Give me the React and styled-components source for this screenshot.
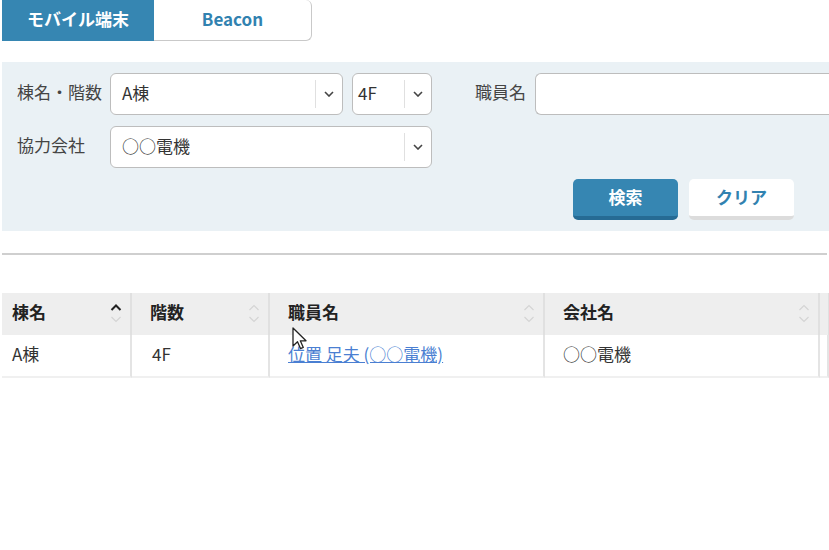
import React from 'react';
import styled, { createGlobalStyle } from 'styled-components';

const Global = createGlobalStyle`
  html, body {
    margin: 0;
    padding: 0;
    background: #fff;
  }
  body {
    font-family: "Noto Sans CJK JP", "Noto Sans", sans-serif;
    color: #333;
    line-height: 1.2;
  }
`;

const Page = styled.div`
  width: 829px;
  height: 550px;
  padding-left: 2px;
  box-sizing: border-box;
  overflow: hidden;
  position: relative;
`;

const Tabs = styled.div`
  display: flex;
  height: 41px;
`;

const Tab = styled.div`
  width: ${(p) => (p.active ? '152px' : '158px')};
  box-sizing: border-box;
  display: flex;
  align-items: center;
  justify-content: center;
  padding-bottom: 2px;
  font-size: 17px;
  font-weight: 700;
  background: ${(p) => (p.active ? '#3686b2' : '#fff')};
  color: ${(p) => (p.active ? '#fff' : '#3182b0')};
  border: ${(p) => (p.active ? 'none' : '1px solid #c9c9c9')};
  border-left: none;
  border-top: none;
  border-radius: ${(p) => (p.active ? '0' : '0 6px 6px 0')};
`;

const Panel = styled.div`
  margin-top: 21px;
  width: 827px;
  height: 169px;
  box-sizing: border-box;
  background: #eaf1f5;
  padding: 11px 0 0 15px;
  display: flex;
  flex-direction: column;
  gap: 11px;
`;

const Row = styled.div`
  display: flex;
  align-items: center;
  height: 42px;
`;

const Label = styled.div`
  width: ${(p) => (p.auto ? 'auto' : '93px')};
  font-size: 17px;
  color: #444;
  white-space: nowrap;
  padding-bottom: 4px;
  margin-left: ${(p) => p.offset || 0}px;
`;

const Select = styled.div`
  width: ${(p) => p.width}px;
  height: 42px;
  box-sizing: border-box;
  background: #fff;
  border: 1px solid #bdbdbd;
  border-radius: 6px;
  display: flex;
  align-items: center;
  margin-right: ${(p) => p.gap || 0}px;
  flex-shrink: 0;
`;

const SelectValue = styled.div`
  flex: 1;
  padding-left: ${(p) => p.pad || 11}px;
  padding-bottom: 2px;
  font-size: 17px;
  color: #333;
`;

const SelectArrow = styled.div`
  width: 26px;
  height: 28px;
  border-left: 1px solid #e0e0e0;
  display: flex;
  align-items: center;
  justify-content: center;
  color: #555;
`;

const TextInput = styled.div`
  flex: 1;
  height: 42px;
  box-sizing: border-box;
  background: #fff;
  border: 1px solid #bdbdbd;
  border-right: none;
  border-radius: 6px 0 0 6px;
  margin-left: 9px;
`;

const Buttons = styled.div`
  display: flex;
  gap: 11px;
  padding-left: 556px;
`;

const Button = styled.div`
  width: 105px;
  height: 41px;
  box-sizing: border-box;
  border-radius: 5px;
  display: flex;
  align-items: center;
  justify-content: center;
  font-size: 17px;
  font-weight: 700;
  background: ${(p) => (p.primary ? '#3686b2' : '#fff')};
  color: ${(p) => (p.primary ? '#fff' : '#3182b0')};
  border-bottom: 4px solid ${(p) => (p.primary ? '#266b94' : '#dcdcdc')};
`;

const Divider = styled.div`
  margin-top: 22px;
  width: 825px;
  height: 2px;
  background: #cfcfcf;
`;

const TableWrap = styled.div`
  margin-top: 38px;
  position: relative;
`;

const Table = styled.div`
  display: grid;
  grid-template-columns: 130px 138px 275px 275px 9px;
`;

const HeadCell = styled.div`
  height: 42px;
  box-sizing: border-box;
  background: #eeeeee;
  border-right: 2px solid #e0e0e0;
  display: flex;
  align-items: center;
  padding-left: ${(p) => p.pad}px;
  padding-right: 8px;
  font-size: 17px;
  font-weight: 700;
  color: #222;
`;

const HeadText = styled.span`
  flex: 1;
  padding-bottom: 4px;
`;

const Cell = styled.div`
  height: 43px;
  box-sizing: border-box;
  border-right: 2px solid #e4e4e4;
  border-bottom: 2px solid #f0f0f0;
  display: flex;
  align-items: center;
  padding-left: ${(p) => p.pad}px;
  padding-bottom: 3px;
  font-size: 17px;
  color: #333;
`;

const Link = styled.a`
  color: #4a7fd2;
  text-decoration: underline;
`;

const Cursor = styled.svg`
  position: absolute;
  left: 290px;
  top: 34px;
`;

const Chevron = () => (
  <svg width="10" height="6" viewBox="0 0 10 6">
    <path d="M1 1l4 4 4-4" fill="none" stroke="#444" strokeWidth="1.6" />
  </svg>
);

const Sort = ({ active }) => (
  <svg width="12" height="22" viewBox="0 0 12 22">
    <path d="M1.5 7l4.5-4.5L10.5 7" fill="none" stroke={active ? '#222' : '#d4d4d4'} strokeWidth={active ? 2 : 1.2} />
    <path d="M1.5 14l4.5 4.5 4.5-4.5" fill="none" stroke="#d4d4d4" strokeWidth="1.2" />
  </svg>
);

const columns = [
  { title: '棟名', pad: 10, active: true },
  { title: '階数', pad: 18 },
  { title: '職員名', pad: 18 },
  { title: '会社名', pad: 18 },
];

export default function App() {
  return (
    <Page>
      <Global />
      <Tabs>
        <Tab active>モバイル端末</Tab>
        <Tab>Beacon</Tab>
      </Tabs>

      <Panel>
        <Row>
          <Label>棟名・階数</Label>
          <Select width={233} gap={9}>
            <SelectValue>A棟</SelectValue>
            <SelectArrow><Chevron /></SelectArrow>
          </Select>
          <Select width={80}>
            <SelectValue pad={5}>4F</SelectValue>
            <SelectArrow><Chevron /></SelectArrow>
          </Select>
          <Label offset={43} auto>職員名</Label>
          <TextInput />
        </Row>
        <Row>
          <Label>協力会社</Label>
          <Select width={322}>
            <SelectValue>○○電機</SelectValue>
            <SelectArrow><Chevron /></SelectArrow>
          </Select>
        </Row>
        <Buttons>
          <Button primary>検索</Button>
          <Button>クリア</Button>
        </Buttons>
      </Panel>

      <Divider />

      <TableWrap>
        <Table>
          {columns.map((c) => (
            <HeadCell key={c.title} pad={c.pad}>
              <HeadText>{c.title}</HeadText>
              <Sort active={c.active} />
            </HeadCell>
          ))}
          <HeadCell pad={0} />
          <Cell pad={10}>A棟</Cell>
          <Cell pad={20}>4F</Cell>
          <Cell pad={18}><Link>位置 足夫 (○○電機)</Link></Cell>
          <Cell pad={18}>○○電機</Cell>
          <Cell pad={0} />
        </Table>
        <Cursor width="16" height="24" viewBox="0 0 16 24">
          <path d="M1 1v18l4.5-4.2 3 6.8 2.8-1.2-3-6.6H14z" fill="#fff" stroke="#222" strokeWidth="1.3" strokeLinejoin="round" />
        </Cursor>
      </TableWrap>
    </Page>
  );
}
